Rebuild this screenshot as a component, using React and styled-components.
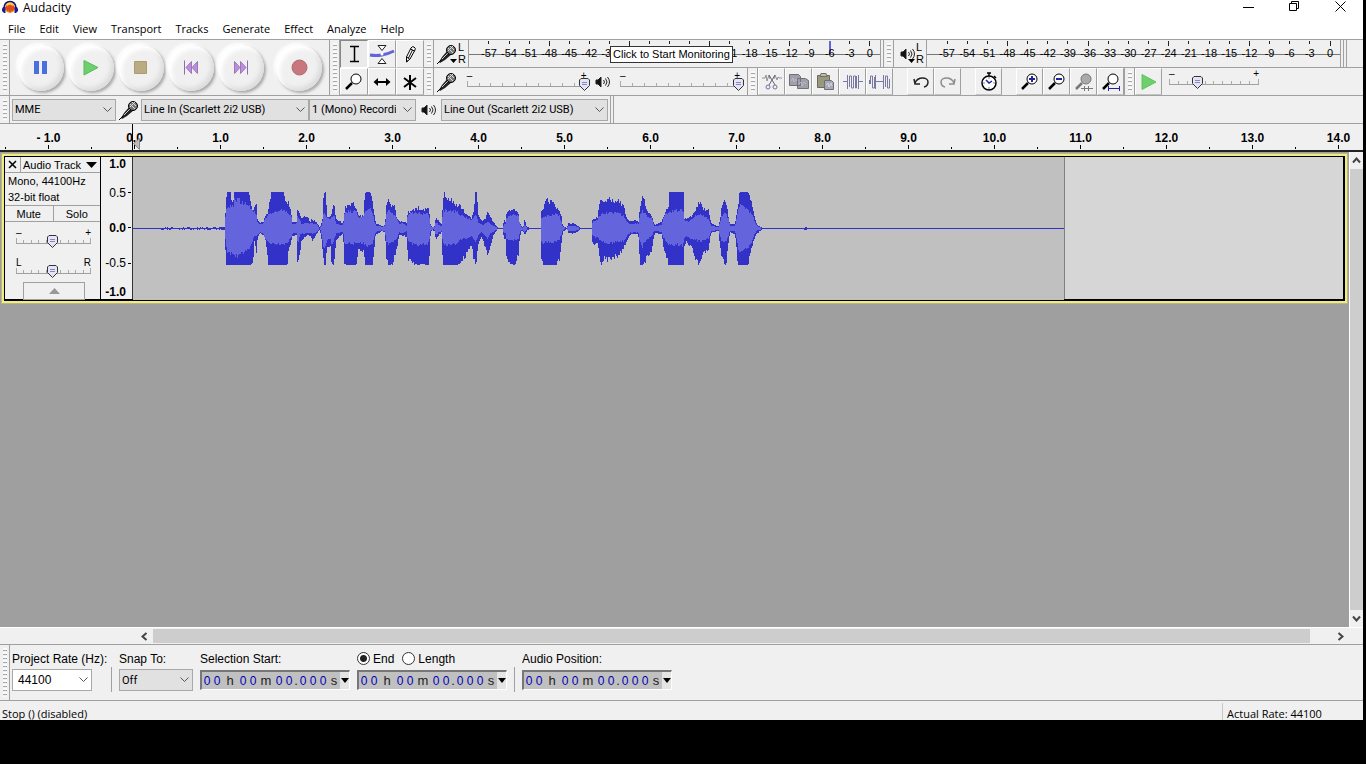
import { useState } from "react"
import styled, { createGlobalStyle, css } from "styled-components"

const meterMarks = [57, 54, 51, 48, 45, 42, 39, 36, 33, 30, 27, 24, 21, 18, 15, 12, 9, 6, 3, 0]
const menus = ["File", "Edit", "View", "Transport", "Tracks", "Generate", "Effect", "Analyze", "Help"]
const seconds = Array.from({ length: 16 }, (_, i) => i - 1)

const CLIP_WIDTH = 931
const CLIP_MID = 71
const CLIP_PEAK = 36

// [x, peak up, peak down, rms up, rms down] in thirds of a pixel
const envelope = [
  [0, 0, 0, 0, 0], [80, 0, 0, 0, 0], [85, 1, 1, 0, 0], [240, 1, 1, 0, 0], [274, 3, 3, 0, 0],
  [279, 80, 108, 60, 50], [282, 111, 108, 60, 70], [293, 111, 108, 66, 75], [296, 72, 108, 60, 75],
  [302, 80, 108, 72, 82], [304, 111, 108, 88, 84], [346, 111, 108, 70, 64], [352, 80, 108, 58, 50],
  [358, 55, 104, 50, 40], [362, 52, 75, 50, 25], [364, 68, 35, 50, 22], [371, 68, 75, 35, 22],
  [373, 24, 30, 18, 18], [381, 16, 12, 10, 10], [391, 18, 18, 14, 14], [396, 34, 30, 28, 28],
  [402, 42, 60, 36, 34], [405, 46, 108, 40, 36], [410, 80, 108, 44, 40], [414, 108, 108, 46, 44],
  [451, 111, 108, 56, 46], [456, 85, 108, 50, 46], [462, 78, 108, 46, 46], [466, 76, 70, 46, 40],
  [474, 45, 35, 38, 24], [478, 18, 20, 12, 14], [490, 20, 18, 14, 12], [493, 50, 95, 34, 40],
  [496, 55, 100, 34, 40], [500, 45, 80, 30, 20], [504, 30, 35, 12, 15], [521, 36, 20, 16, 12],
  [531, 20, 20, 14, 14], [538, 26, 36, 14, 14], [551, 16, 14, 10, 8], [560, 2, 2, 0, 0],
  [564, 8, 20, 3, 8], [568, 30, 60, 20, 30], [572, 105, 108, 50, 60], [578, 108, 108, 40, 50],
  [582, 30, 50, 30, 30], [592, 36, 55, 28, 30], [595, 45, 100, 32, 40], [600, 70, 108, 35, 45],
  [604, 60, 85, 35, 30], [610, 28, 30, 12, 12], [630, 14, 14, 8, 8], [634, 50, 100, 40, 42],
  [638, 65, 108, 50, 44], [646, 72, 108, 50, 44], [664, 72, 108, 52, 44], [671, 50, 105, 46, 44],
  [676, 36, 65, 32, 40], [691, 38, 70, 34, 44], [696, 105, 108, 50, 44], [701, 111, 108, 58, 50],
  [711, 111, 108, 60, 50], [718, 75, 108, 50, 44], [724, 40, 50, 20, 20], [728, 12, 14, 8, 8],
  [736, 12, 14, 6, 6], [746, 6, 6, 4, 4], [756, 8, 10, 6, 6], [759, 60, 85, 40, 38],
  [766, 86, 108, 50, 44], [774, 70, 108, 45, 40], [784, 72, 85, 40, 34], [791, 30, 60, 28, 30],
  [798, 20, 18, 12, 10], [806, 22, 18, 14, 12], [820, 16, 24, 8, 8], [824, 46, 85, 42, 36],
  [836, 50, 100, 46, 44], [856, 60, 108, 44, 48], [866, 50, 104, 44, 46], [882, 62, 108, 46, 44],
  [888, 50, 108, 38, 40], [892, 14, 20, 8, 8], [896, 3, 3, 2, 2], [904, 5, 5, 2, 2],
  [908, 32, 34, 18, 20], [916, 22, 20, 10, 10], [926, 10, 10, 6, 6], [929, 80, 108, 50, 40],
  [934, 108, 108, 50, 44], [938, 90, 108, 54, 46], [956, 84, 108, 52, 44], [971, 66, 108, 48, 42],
  [981, 66, 104, 40, 32], [996, 46, 80, 32, 28], [1016, 30, 50, 26, 22], [1023, 60, 95, 30, 30],
  [1026, 111, 108, 40, 40], [1031, 108, 90, 34, 35], [1036, 40, 45, 16, 18], [1046, 20, 20, 10, 8],
  [1056, 26, 55, 12, 20], [1064, 50, 85, 20, 30], [1072, 35, 50, 12, 12], [1081, 18, 18, 8, 8],
  [1091, 4, 4, 2, 2], [1095, 0, 0, 0, 0], [1109, 0, 0, 0, 0], [1112, 24, 26, 10, 12],
  [1117, 20, 30, 10, 12], [1120, 40, 85, 30, 28], [1129, 52, 104, 38, 34], [1146, 54, 108, 38, 34],
  [1156, 40, 75, 34, 30], [1160, 15, 25, 10, 10], [1166, 3, 3, 1, 1], [1172, 6, 10, 4, 6],
  [1175, 35, 18, 12, 8], [1178, 10, 14, 4, 5], [1183, 3, 3, 1, 1], [1190, 0, 0, 0, 0],
  [1222, 0, 0, 0, 0], [1224, 50, 90, 30, 36], [1231, 55, 108, 34, 42], [1239, 92, 108, 36, 38],
  [1246, 78, 108, 40, 40], [1263, 80, 108, 42, 38], [1271, 58, 108, 40, 36], [1279, 50, 90, 36, 30],
  [1286, 30, 40, 14, 14], [1289, 6, 6, 2, 2], [1302, 0, 0, 0, 0], [1305, 14, 12, 6, 6],
  [1321, 14, 13, 6, 6], [1336, 6, 8, 3, 3], [1341, 0, 0, 0, 0], [1376, 0, 0, 0, 0],
  [1378, 22, 35, 16, 18], [1383, 30, 45, 22, 24], [1393, 30, 40, 24, 26], [1399, 70, 85, 36, 36],
  [1405, 88, 108, 42, 38], [1411, 76, 90, 42, 38], [1429, 86, 92, 46, 42], [1436, 80, 88, 46, 42],
  [1456, 80, 80, 44, 40], [1471, 66, 60, 36, 36], [1481, 30, 35, 20, 22], [1491, 20, 16, 12, 10],
  [1514, 22, 15, 14, 10], [1516, 20, 25, 12, 12], [1520, 60, 95, 36, 38], [1528, 92, 108, 50, 52],
  [1534, 88, 104, 50, 40], [1541, 50, 85, 38, 30], [1556, 36, 60, 30, 22], [1562, 16, 25, 8, 8],
  [1566, 10, 10, 5, 5], [1586, 18, 16, 10, 10], [1591, 35, 50, 30, 28], [1601, 55, 90, 44, 38],
  [1606, 60, 108, 44, 44], [1608, 111, 108, 50, 44], [1646, 111, 108, 54, 50], [1651, 108, 108, 50, 45],
  [1654, 30, 50, 25, 25], [1661, 28, 40, 20, 22], [1668, 30, 50, 20, 26], [1676, 38, 55, 26, 30],
  [1686, 50, 85, 36, 32], [1696, 76, 108, 36, 36], [1703, 80, 92, 40, 38], [1711, 56, 75, 36, 34],
  [1726, 54, 60, 28, 28], [1731, 30, 25, 14, 12], [1736, 12, 10, 6, 6], [1756, 6, 6, 3, 3],
  [1761, 30, 50, 18, 22], [1766, 66, 80, 36, 38], [1773, 78, 98, 46, 40], [1780, 72, 104, 40, 36],
  [1786, 35, 40, 28, 20], [1791, 10, 10, 5, 5], [1806, 14, 14, 6, 6], [1811, 40, 70, 30, 34],
  [1814, 60, 108, 45, 50], [1819, 105, 108, 64, 70], [1823, 111, 108, 68, 72], [1841, 111, 108, 55, 60],
  [1849, 100, 90, 50, 50], [1856, 70, 55, 42, 36], [1863, 40, 30, 25, 18], [1871, 10, 14, 6, 5],
  [1886, 2, 2, 0, 0], [1890, 0, 0, 0, 0], [2010, 0, 0, 0, 0], [2018, 3, 3, 0, 0],
  [2026, 0, 0, 0, 0], [2796, 0, 0, 0, 0],
]

function noise(x, channel) {
  const n = Math.sin(x * 12.9898 + channel * 78.233) * 43758.5453
  return (n - Math.floor(n)) * 2 - 1
}

function sample(x, channel) {
  const next = envelope.findIndex(point => point[0] > x)
  if (next < 1) {
    return 0
  }
  const a = envelope[next - 1]
  const b = envelope[next]
  const value = a[channel] + ((b[channel] - a[channel]) * (x - a[0])) / (b[0] - a[0])
  if (value === 0) {
    return 0
  }
  // ripple so that the slopes look like audio, clipped peaks stay flat
  const depth = value < 4 ? 1 : value * 0.1
  const ripple = value > 104 ? 0 : noise(x, channel) * depth
  return Math.min(CLIP_PEAK, Math.round((value + ripple) / 3))
}

function buildWave(up, down) {
  let path = ""
  for (let x = 0; x < CLIP_WIDTH; x++) {
    const top = sample(x * 3 + 1, up)
    const bottom = sample(x * 3 + 1, down)
    if (top + bottom > 0) {
      path += `M${x} ${CLIP_MID - top}h1V${CLIP_MID + bottom + 1}h-1z`
    }
  }
  return path
}

const peakPath = buildWave(1, 2)
const rmsPath = buildWave(3, 4)

export default function App() {
  return (
    <Screen>
      <GlobalStyle />
      <Window>
        <TitleBar />
        <Menu>
          {menus.map(name => (
            <MenuButton key={name}>{name}</MenuButton>
          ))}
        </Menu>
        <Toolbars />
        <DeviceBar />
        <Timeline />
        <Workspace />
        <BottomScroll />
        <SelectionBar />
        <StatusBar>
          <StatusText>Stop () (disabled)</StatusText>
          <RateText>Actual Rate: 44100</RateText>
        </StatusBar>
      </Window>
    </Screen>
  )
}

function TitleBar() {
  return (
    <Title>
      <svg width="16" height="16" viewBox="0 0 16 16">
        <circle cx="8" cy="8" r="5" fill="#f08a1c" />
        <path d="M4 10l1-4 1 5 1-6 1 7 1-7 1 6 1-5 1 4" fill="none" stroke="#e0401c" />
        <path d="M5 5q3-3 6 0" fill="none" stroke="#ffd23a" strokeWidth="2" />
        <path d="M2 9C1 -1 15 -1 14 9" fill="none" stroke="#10106c" strokeWidth="1.500" />
        <path d="M1 7h2.500v6H2L0 11V9zM15 7h-2.500v6H14l2-2V9z" fill="#1c1c90" />
      </svg>
      <TitleText>Audacity</TitleText>
      <CaptionButton aria-label="Minimize">
        <svg width="11" height="11"><path d="M0 6.500h11" stroke="#000" /></svg>
      </CaptionButton>
      <CaptionButton aria-label="Restore">
        <svg width="11" height="11" fill="none" stroke="#000">
          <path d="M0.500 2.500h7v7h-7zM2.500 2.500v-2h7v7h-2" />
        </svg>
      </CaptionButton>
      <CaptionButton aria-label="Close">
        <svg width="11" height="11" stroke="#000"><path d="M0.500 0.500l10 10M10.500 0.500l-10 10" /></svg>
      </CaptionButton>
    </Title>
  )
}

function Toolbars() {
  return (
    <ToolDock>
      <Grip />
      <Transport>
        <RoundButton aria-label="Pause">
          <svg width="14" height="14"><path d="M0 0h5v13H0zM8 0h5v13H8z" fill="#4a70e0" /></svg>
        </RoundButton>
        <RoundButton aria-label="Play">
          <svg width="16" height="16"><path d="M1 0.500L15 7.500L1 15z" fill="#6dd06d" stroke="#58b858" /></svg>
        </RoundButton>
        <RoundButton aria-label="Stop">
          <svg width="14" height="14"><path d="M0.500 0.500h12v12h-12z" fill="#bcab82" stroke="#ab9b75" /></svg>
        </RoundButton>
        <RoundButton aria-label="Skip to Start">
          <svg width="14" height="15">
            <path d="M0.500 0.500v14" stroke="#8d6bb5" />
            <path d="M7.500 1.500L2 7.500L7.500 13.500zM13.500 1.500L8 7.500L13.500 13.500z" fill="#bb8fdc" stroke="#9a78b8" />
          </svg>
        </RoundButton>
        <RoundButton aria-label="Skip to End">
          <svg width="14" height="15">
            <path d="M13.500 0.500v14" stroke="#8d6bb5" />
            <path d="M0.500 1.500L6 7.500L0.500 13.500zM6.500 1.500L12 7.500L6.500 13.500z" fill="#bb8fdc" stroke="#9a78b8" />
          </svg>
        </RoundButton>
        <RoundButton aria-label="Record" $apart>
          <svg width="17" height="17"><circle cx="8.500" cy="8.500" r="7.500" fill="#c8787c" stroke="#b06a6e" /></svg>
        </RoundButton>
      </Transport>
      <Grip $divided />
      <ToolGrid>
        <ToolButton aria-label="Selection Tool" $pressed>
          <svg width="20" height="20"><path d="M6 2.500h9M6 17.500h9M10.500 2v16" stroke="#000" strokeWidth="1.500" /></svg>
        </ToolButton>
        <ToolButton aria-label="Envelope Tool">
          <svg width="26" height="22" fill="none">
            <path d="M1 12q6 1 12 0t12-4" stroke="#6464d8" strokeWidth="3" />
            <path d="M9 2.500h8l-4 5zM9 20.500h8l-4-5z" fill="#fff" stroke="#222" />
            <circle cx="13" cy="11" r="1.500" fill="#fff" />
          </svg>
        </ToolButton>
        <ToolButton aria-label="Draw Tool">
          <svg width="20" height="20">
            <path d="M6.500 13l4.500-9q1-2 3-1t1 3l-5 9-3.500 3z" fill="#fff" stroke="#000" />
            <path d="M12.500 6l-4 8M6.500 13l3 2M10.500 5l4 2M7 16v2" stroke="#000" />
          </svg>
        </ToolButton>
        <ToolButton aria-label="Zoom Tool"><Magnifier /></ToolButton>
        <ToolButton aria-label="Time Shift Tool">
          <svg width="20" height="20">
            <path d="M4 10h12" stroke="#000" strokeWidth="2" />
            <path d="M6 6v8l-4.500-4zM14 6v8l4.500-4z" />
          </svg>
        </ToolButton>
        <ToolButton aria-label="Multi-Tool">
          <svg width="20" height="20"><path d="M10 3v15M4 6l12 9M16 6L4 15" stroke="#000" strokeWidth="2" /></svg>
        </ToolButton>
      </ToolGrid>
      <MeterStack>
        <StackRow $ruled>
          <Grip />
          <MeterPanel>
            <Mic />
            <Channels />
            <Meter peak={6} covered={[36, 24]} />
            <Tooltip role="tooltip">Click to Start Monitoring</Tooltip>
          </MeterPanel>
          <Grip $divided />
          <MeterPanel $playback>
            <Speaker />
            <Channels />
            <Meter />
          </MeterPanel>
          <BarEnd />
        </StackRow>
        <StackRow>
          <Grip />
          <Mixer>
            <Mic />
            <Slider label="Recording Volume" start={98} wide />
            <Speaker />
            <Slider label="Playback Volume" start={98} wide />
          </Mixer>
          <Grip $divided />
          <EditButtons />
          <Grip $divided />
          <ToolButton aria-label="Play-at-Speed">
            <svg width="20" height="20"><path d="M3 2.500L17 10L3 17.500z" fill="#6dd06d" stroke="#5cc45c" /></svg>
          </ToolButton>
          <SpeedBox>
            <Slider label="Playback Speed" start={31} />
          </SpeedBox>
        </StackRow>
      </MeterStack>
    </ToolDock>
  )
}

function EditButtons() {
  return (
    <>
      <ToolButton aria-label="Cut">
        <svg width="20" height="20" fill="none" stroke="#8f8f9c">
          <path d="M0 6h3l1-3 1 6 2-6 1 4M12 7l1-4 2 5 1-3 1 1h3" />
          <path d="M7 3l6 10M13 3L7 13" stroke="#666672" />
          <circle cx="6" cy="15" r="2" stroke="#7070a0" /><circle cx="13" cy="15" r="2" stroke="#7070a0" />
        </svg>
      </ToolButton>
      <ToolButton aria-label="Copy">
        <svg width="20" height="20" fill="#a0a0a8" stroke="#70707a">
          <path d="M0.500 2.500h9l2 2v9h-11zM8.500 6.500h8l3 2v8h-11z" />
          <path d="M2 9l2-3 1 4 2-3 1 2M10 12l2-2 1 4 2-4 2 2" fill="none" stroke="#b8b8d4" />
        </svg>
      </ToolButton>
      <ToolButton aria-label="Paste">
        <svg width="20" height="20">
          <path d="M1.500 3.500h12v12h-12z" fill="#98987c" stroke="#6c6c5c" />
          <path d="M5 1.500h5l1 3H4z" fill="#bcbcae" stroke="#70706a" />
          <path d="M8.500 8.500h7l2 2v7h-9z" fill="#a8a8b4" stroke="#70707a" />
          <path d="M10 13l2-2 1 4 2-4 1 3" fill="none" stroke="#d4d4e4" />
        </svg>
      </ToolButton>
      <ToolButton aria-label="Trim Audio">
        <svg width="20" height="20" fill="none" stroke="#7878a0">
          <path d="M0 9.500h4M16 9.500h4M4.500 3v14M15.500 3v14M6.500 15V4h2v12h2V4h2v12h1V4" />
        </svg>
      </ToolButton>
      <ToolButton aria-label="Silence Audio">
        <svg width="22" height="20" fill="none" stroke="#7878a0">
          <path d="M0.500 8v4M1.500 12V4h2v12h2V5M6.500 3v14M6.500 9.500h8M14.500 3v14M16.500 15V4h2v12h2V7" />
        </svg>
      </ToolButton>
      <Gap />
      <ToolButton aria-label="Undo">
        <svg width="20" height="20" fill="none" stroke="#222" strokeWidth="1.500">
          <path d="M4 11C7 4 17 5 17 10q0 4-4 5" /><path d="M3 7l1 5h5" />
        </svg>
      </ToolButton>
      <ToolButton aria-label="Redo">
        <svg width="20" height="20" fill="none" stroke="#8c8c8c" strokeWidth="1.500">
          <path d="M16 11C13 4 3 5 3 10q0 4 4 5" /><path d="M17 7l-1 5h-5" />
        </svg>
      </ToolButton>
      <Gap />
      <ToolButton aria-label="Sync-Lock Tracks">
        <svg width="20" height="20" fill="none" stroke="#000" strokeWidth="1.500">
          <path d="M8 1h4M10 1v3M15 4l2 2" /><circle cx="10" cy="11" r="7" fill="#fff" />
          <path d="M7 8l3 3 3-2" stroke="#2020a0" />
          <path d="M10 5.500v1M10 15.500v1M4.500 11h1M14.500 11h1" strokeWidth="1" />
        </svg>
      </ToolButton>
      <Gap />
      <ToolButton aria-label="Zoom In"><Magnifier sign="M9 7h6M12 4v6" /></ToolButton>
      <ToolButton aria-label="Zoom Out"><Magnifier sign="M9 7h6" /></ToolButton>
      <ToolButton aria-label="Fit Selection"><Magnifier muted /></ToolButton>
      <ToolButton aria-label="Fit Project"><Magnifier fit /></ToolButton>
    </>
  )
}

function Magnifier({ sign, muted, fit }) {
  const ink = muted ? "#777" : "#000"
  return (
    <svg width="20" height="20" fill="none">
      <path d="M8 11l-6 6" stroke={ink} strokeWidth="2.500" />
      <circle cx="12" cy="7" r="5" fill={muted ? "#aaa" : "#fff"} stroke={ink} />
      {sign && <path d={sign} stroke="#2020a0" strokeWidth="2" />}
      {muted && <path d="M7 16.500h12M10.500 14v5M14.500 14v5" stroke="#777" />}
      {fit && <path d="M7 16.500h12M7.500 14v5M18.500 14v5" stroke="#2020a0" />}
    </svg>
  )
}

function Mic() {
  return (
    <svg width="22" height="22">
      <path d="M3 19l3-5 6-7 4 4-7 6-5 3z" fill="#222" />
      <path d="M1 21l4-4" stroke="#000" />
      <path d="M6 16l6-6" stroke="#ccc" />
      <circle cx="15" cy="7" r="4.500" fill="#777" stroke="#000" />
      <path d="M12 5l5 5M14 3l4 4M12 8l5-5" stroke="#ddd" />
    </svg>
  )
}

function Speaker() {
  return (
    <svg width="16" height="16" fill="none" stroke="#222">
      <path d="M1 6h2l3-3v10l-3-3H1z" fill="#111" />
      <path d="M8.500 6q2 2 0 4M10.500 4.500q3 3.500 0 7M12.500 3q4 5 0 10" />
    </svg>
  )
}

function Channels() {
  return (
    <ChannelBox>
      <svg width="7" height="4"><path d="M0 0h7L3.500 4z" /></svg>
      <ChannelNames>
        <span>L</span>
        <span>R</span>
      </ChannelNames>
    </ChannelBox>
  )
}

function Meter({ peak, covered = [0, 1] }) {
  // marks fully behind the hint keep their tick but get no label
  const isCovered = mark => mark <= covered[0] && mark >= covered[1]

  return (
    <MeterScale>
      {meterMarks.map(mark => (
        <MeterCell key={mark} $long={mark % 12 === 0} $peak={mark === peak}>
          {isCovered(mark) ? null : mark === 0 ? "0" : `-${mark}`}
        </MeterCell>
      ))}
    </MeterScale>
  )
}

function Slider({ label, start, wide, ends = ["–", "+"] }) {
  const [value, setValue] = useState(start)
  return (
    <SliderBox $wide={wide}>
      <SliderEnds>
        <span>{ends[0]}</span>
        <span>{ends[1]}</span>
      </SliderEnds>
      <SliderTicks>
        {Array.from({ length: 11 }, (_, i) => (
          <i key={i} />
        ))}
      </SliderTicks>
      <Thumb style={{ left: `${value}%` }} width="13" height="15">
        <path d="M3 1.500h7l1.500 1.500v5.500l-5 5-5-5V3z" fill="#e4e4f4" stroke="#333" />
        <path d="M4 5.500h5M4 7.500h5" stroke="#8888c0" />
      </Thumb>
      <RangeInput
        type="range"
        aria-label={label}
        value={value}
        onChange={e => setValue(Number(e.target.value))}
      />
    </SliderBox>
  )
}

function Dropdown({ id, label, children, width, white }) {
  return (
    <SelectBox $width={width}>
      <Select id={id} aria-label={label} $white={white}>
        <option>{children}</option>
      </Select>
      <svg width="9" height="6" fill="none" stroke="#555"><path d="M0.500 0.500l4 4 4-4" /></svg>
    </SelectBox>
  )
}

function DeviceBar() {
  return (
    <Devices>
      <Grip />
      <DeviceList>
        <Dropdown label="Audio Host" width={104}>MME</Dropdown>
        <DeviceIcon><Mic /></DeviceIcon>
        <Dropdown label="Recording Device" width={168}>Line In (Scarlett 2i2 USB)</Dropdown>
        <Dropdown label="Recording Channels" width={107}>1 (Mono) Recording Channel</Dropdown>
        <DeviceIcon><Speaker /></DeviceIcon>
        <Dropdown label="Playback Device" width={167}>Line Out (Scarlett 2i2 USB)</Dropdown>
      </DeviceList>
      <BarEnd />
    </Devices>
  )
}

function Timeline() {
  return (
    <Ruler>
      {seconds.map(second => (
        <RulerCell key={second}>
          <RulerLabel>{second < 0 ? "- 1.0" : `${second}.0`}</RulerLabel>
        </RulerCell>
      ))}
      <Playhead width="9" height="27">
        <path d="M0.500 0v27" stroke="#000" />
        <path d="M1.500 19.500l6-5v11z" fill="#bbb" stroke="#888" />
      </Playhead>
    </Ruler>
  )
}

function Workspace() {
  return (
    <Work>
      <TrackArea>
        <Track>
          <TrackControls>
            <TrackHead>
              <CloseTrack aria-label="Close track">
                <svg width="9" height="9"><path d="M1 1l7 7M8 1L1 8" stroke="#000" strokeWidth="1.500" /></svg>
              </CloseTrack>
              <TrackName>
                Audio Track
                <svg width="11" height="6"><path d="M0 0h11L5.500 6z" /></svg>
              </TrackName>
            </TrackHead>
            <TrackInfo>
              <span>Mono, 44100Hz</span>
              <span>32-bit float</span>
            </TrackInfo>
            <MuteSolo>
              <TrackButton>Mute</TrackButton>
              <TrackButton>Solo</TrackButton>
            </MuteSolo>
            <TrackSliders>
              <Slider label="Gain" start={48} />
              <Slider label="Pan" start={48} ends={["L", "R"]} />
            </TrackSliders>
            <Collapse aria-label="Collapse track">
              <svg width="11" height="6"><path d="M0 6h11L5.500 0z" fill="#999" /></svg>
            </Collapse>
          </TrackControls>
          <Amplitude>
            <Level $bold>1.0</Level>
            <Level $tick>0.5</Level>
            <Level $bold $tick>0.0</Level>
            <Level $tick>-0.5</Level>
            <Level $bold>-1.0</Level>
          </Amplitude>
          <Clip width={CLIP_WIDTH} height="143" shapeRendering="crispEdges">
            <rect y={CLIP_MID} width={CLIP_WIDTH} height="1" fill="#3232c8" />
            <path d={peakPath} fill="#3232c8" />
            <path d={rmsPath} fill="#6464dc" />
          </Clip>
          <EmptyTrack />
        </Track>
      </TrackArea>
      <SideScroll>
        <ScrollButton aria-label="Scroll up">
          <svg width="9" height="7" fill="none" stroke="#444" strokeWidth="2"><path d="M1 5.500l3.500-4 3.500 4" /></svg>
        </ScrollButton>
        <ScrollThumb />
        <ScrollButton aria-label="Scroll down">
          <svg width="9" height="7" fill="none" stroke="#444" strokeWidth="2"><path d="M1 1.500l3.500 4 3.500-4" /></svg>
        </ScrollButton>
      </SideScroll>
    </Work>
  )
}

function BottomScroll() {
  return (
    <HorizontalScroll>
      <ScrollButton aria-label="Scroll left">
        <svg width="7" height="9" fill="none" stroke="#444" strokeWidth="2"><path d="M5.500 1L1.500 4.500l4 3.500" /></svg>
      </ScrollButton>
      <ScrollThumb />
      <ScrollSpace />
      <ScrollButton aria-label="Scroll right">
        <svg width="7" height="9" fill="none" stroke="#444" strokeWidth="2"><path d="M1.500 1l4 3.500-4 3.500" /></svg>
      </ScrollButton>
    </HorizontalScroll>
  )
}

function TimeField({ label }) {
  return (
    <TimeBox role="group" aria-label={label}>
      {"00h00m00.000s".split("").map((char, i) =>
        char === "0" ? (
          <Digit key={i} defaultValue="0" maxLength={1} aria-label={`${label} digit ${i + 1}`} />
        ) : (
          <Unit key={i} $narrow={char === "."}>{char}</Unit>
        )
      )}
      <TimeMenu aria-label={`${label} format`}>
        <svg width="8" height="5"><path d="M0 0h8L4 5z" /></svg>
      </TimeMenu>
    </TimeBox>
  )
}

function SelectionBar() {
  return (
    <Selection>
      <Grip />
      <SelectionFields>
        <Field>
          <FieldLabel htmlFor="rate">Project Rate (Hz):</FieldLabel>
          <Dropdown id="rate" width={80} white>44100</Dropdown>
        </Field>
        <Separator />
        <Field>
          <FieldLabel htmlFor="snap">Snap To:</FieldLabel>
          <Dropdown id="snap" width={74}>Off</Dropdown>
        </Field>
        <Field>
          <FieldName>Selection Start:</FieldName>
          <TimeField label="Selection Start" />
        </Field>
        <Field>
          <RadioRow>
            <RadioLabel>
              <Radio type="radio" name="range" defaultChecked />
              End
            </RadioLabel>
            <RadioLabel>
              <Radio type="radio" name="range" />
              Length
            </RadioLabel>
          </RadioRow>
          <TimeField label="Selection End" />
        </Field>
        <Separator />
        <Field>
          <FieldName>Audio Position:</FieldName>
          <TimeField label="Audio Position" />
        </Field>
      </SelectionFields>
    </Selection>
  )
}

const GlobalStyle = createGlobalStyle`
  * {
    box-sizing: border-box;
  }

  body {
    margin: 0;
    background: #000;
    color: #000;
    font-family: "Liberation Sans", Arial, sans-serif;
    font-size: 12px;
  }

  button, input, select {
    font: inherit;
    color: inherit;
    margin: 0;
    padding: 0;
    border: none;
    background: none;
  }

  svg {
    display: block;
    flex: none;
  }
`

const Screen = styled.div`
  min-height: 100vh;
  display: flex;
  padding: 0 3px 44px 0;
  background: #000;
`

const Window = styled.div`
  flex: 1;
  min-width: 0;
  display: flex;
  flex-direction: column;
  background: #f0f0f0;
  overflow: hidden;
`

const segoe = css`
  font-family: "Open Sans", "Noto Sans", sans-serif;
  font-size: 11px;
`

const Title = styled.header`
  height: 18px;
  display: flex;
  align-items: flex-start;
  background: #fff;
  padding-left: 2px;
`

const TitleText = styled.span`
  ${segoe}
  flex: 1;
  margin-left: 5px;
  font-size: 12px;
  line-height: 15px;
`

const CaptionButton = styled.button`
  width: 46px;
  height: 13px;
  display: grid;
  place-items: center;
`

const Menu = styled.nav`
  height: 21px;
  display: flex;
  background: #fff;
  padding-left: 1px;
`

const MenuButton = styled.button`
  ${segoe}
  padding: 0 7px;
  line-height: 20px;
`

const ToolDock = styled.div`
  display: flex;
  height: 57px;
  border-top: 1px solid #a0a0a0;
  border-bottom: 1px solid #a0a0a0;
`

const Grip = styled.div`
  flex: none;
  width: ${({ $divided }) => ($divided ? "11px" : "10px")};
  border-right: 1px solid #a0a0a0;
  border-left: ${({ $divided }) => ($divided ? "1px solid #a0a0a0" : "none")};
  padding: 3px 2px 3px 3px;
  background: repeating-linear-gradient(#fafafa 0 2px, #a8a8a8 2px 3px, #f0f0f0 3px 4px) content-box;
`

const Transport = styled.div`
  flex: none;
  display: flex;
  align-items: center;
  gap: 4px;
  width: 319px;
  padding-left: 8px;
`

const RoundButton = styled.button`
  width: 46px;
  height: 46px;
  flex: none;
  display: grid;
  place-items: center;
  border-radius: 50%;
  margin-left: ${({ $apart }) => ($apart ? "8px" : 0)};
  background: #f0f0f0;
  box-shadow:
    2px 2px 3px #a8a8a8,
    -2px -2px 3px #fff,
    inset 4px 4px 4px #fff,
    inset -3px -3px 4px #dcdcdc;
`

const ToolGrid = styled.div`
  flex: none;
  display: grid;
  grid-template-columns: repeat(3, 28px);
  grid-template-rows: 28px 27px;
`

const ToolButton = styled.button`
  flex: none;
  width: 27px;
  min-height: 27px;
  display: grid;
  place-items: center;
  border: 1px solid #fff;
  border-right-color: #a0a0a0;
  border-bottom-color: #c4c4c4;

  ${ToolGrid} & {
    width: 28px;
  }

  ${({ $pressed }) =>
    $pressed &&
    css`
      border-color: #888 #fff #fff #888;
      background: #eaeaea;
    `}
`

const MeterStack = styled.div`
  flex: 1;
  min-width: 0;
`

const StackRow = styled.div`
  display: flex;
  height: ${({ $ruled }) => ($ruled ? "28px" : "27px")};
  border-bottom: ${({ $ruled }) => ($ruled ? "1px solid #a0a0a0" : "none")};
`

const MeterPanel = styled.div`
  position: relative;
  flex: 0 1 449px;
  min-width: 0;
  display: flex;
  align-items: center;
  padding-left: ${({ $playback }) => ($playback ? "6px" : "2px")};
  padding-right: 2px;
`

const ChannelBox = styled.div`
  display: flex;
  align-items: flex-end;
  height: 24px;
  margin-left: -8px;
  padding-bottom: 1px;

  svg {
    margin-bottom: 2px;
  }
`

const ChannelNames = styled.div`
  display: flex;
  flex-direction: column;
  font-size: 11px;
  line-height: 12px;
  margin-left: 1px;
`

const MeterScale = styled.div`
  flex: 1;
  min-width: 0;
  display: flex;
  height: 27px;
  margin-left: 2px;
  padding-left: 10px;
  border-left: 1px solid #a0a0a0;
  border-right: 1px solid #a0a0a0;
  background: linear-gradient(#777, #777) 0 14px / 100% 1px no-repeat;
`

const MeterCell = styled.span`
  flex: 1;
  min-width: 0;
  display: flex;
  flex-direction: column;
  align-items: center;
  font-size: 11px;
  line-height: 12px;
  white-space: nowrap;

  &::before {
    content: "";
    width: 1px;
    height: ${({ $long }) => ($long ? "5px" : "3px")};
    margin-top: 1px;
    margin-bottom: ${({ $long }) => ($long ? "1px" : "3px")};
    background: #222;
  }

  ${({ $peak }) =>
    $peak &&
    css`
      &::before {
        width: 2px;
        height: 13px;
        margin-bottom: -7px;
        background: #6464dc;
      }
    `}
`

const Tooltip = styled.div`
  position: absolute;
  left: 176px;
  top: 6px;
  height: 17px;
  padding: 0 2px;
  border: 1px solid #333;
  background: #fff;
  font-size: 11px;
  line-height: 15px;
  white-space: nowrap;
`

const BarEnd = styled.div`
  width: 4px;
  border-left: 1px solid #a0a0a0;
  border-right: 1px solid #a0a0a0;
`

const Mixer = styled.div`
  flex: none;
  display: flex;
  align-items: center;
  justify-content: space-between;
  width: 313px;
  padding: 0 7px 0 2px;
`

const SpeedBox = styled.div`
  width: 90px;
  margin-left: 7px;
`

const SliderBox = styled.div`
  position: relative;
  width: ${({ $wide }) => ($wide ? "120px" : "auto")};
  height: 24px;
`

const SliderEnds = styled.div`
  display: flex;
  justify-content: space-between;
  height: 11px;
  font-size: 10px;
  line-height: 11px;
`

const SliderTicks = styled.div`
  display: flex;
  justify-content: space-between;
  align-items: flex-end;
  height: 6px;
  border-bottom: 1px solid #a0a0a0;

  i {
    width: 1px;
    height: 3px;
    background: #aaa;
  }

  i:first-child, i:last-child {
    height: 5px;
  }
`

const Thumb = styled.svg`
  position: absolute;
  top: 7px;
  margin-left: -6px;
`

const RangeInput = styled.input`
  position: absolute;
  left: 0;
  top: 4px;
  width: 100%;
  height: 20px;
  opacity: 0;
`

const Gap = styled.div`
  flex: none;
  width: 14px;
`

const Devices = styled.div`
  display: flex;
  height: 28px;
  border-bottom: 1px solid #a0a0a0;
`

const DeviceList = styled.div`
  display: flex;
  align-items: center;
  padding: 0 2px;
`

const DeviceIcon = styled.div`
  width: 25px;
  display: grid;
  place-items: center;
`

const SelectBox = styled.div`
  position: relative;
  width: ${({ $width }) => $width}px;

  svg {
    position: absolute;
    right: 4px;
    top: 8px;
    pointer-events: none;
  }
`

const Select = styled.select`
  appearance: none;
  width: 100%;
  height: 22px;
  padding: 0 19px 0 ${({ $white }) => ($white ? "5px" : "2px")};
  border: 1px solid #a8a8a8;
  border-radius: 0;
  background: ${({ $white }) => ($white ? "#fff" : "#e1e1e1")};
  font-family: ${({ $white }) => ($white ? "inherit" : `Roboto, "Open Sans", sans-serif`)};
  font-size: ${({ $white }) => ($white ? "12px" : "11px")};
`

const Ruler = styled.div`
  position: relative;
  display: flex;
  height: 28px;
  padding-left: 5px;
  border-bottom: 2px solid #222;
  overflow: hidden;
`

const RulerCell = styled.div`
  flex: none;
  width: 86px;
  display: flex;
  align-items: flex-end;

  &::before {
    content: "";
    width: 1px;
    height: 2px;
    background: #000;
    margin-bottom: 1px;
  }
`

const RulerLabel = styled.span`
  flex: 1;
  display: flex;
  flex-direction: column;
  align-items: center;
  font-weight: bold;
  line-height: 14px;

  &::after {
    content: "";
    width: 1px;
    height: 4px;
    margin-bottom: 1px;
    background: #000;
  }
`

const Playhead = styled.svg`
  position: absolute;
  left: 132px;
  top: 0;
`

const Work = styled.div`
  flex: 1;
  display: flex;
  background: #9f9f9f;
`

const TrackArea = styled.div`
  flex: 1;
  min-width: 0;
  padding: 2px 2px 0;
  border-right: 1px solid #fff;
`

const Track = styled.section`
  display: flex;
  height: 149px;
  border: 2px solid #f0ec80;
  outline: 1px solid #b8b58c;
  background: #000;
  padding: 1px 2px 2px 1px;
  overflow: hidden;
`

const TrackControls = styled.div`
  flex: none;
  width: 96px;
  background: #f0f0f0;
  border-right: 1px solid #000;
`

const TrackHead = styled.div`
  display: flex;
  height: 16px;
  border-bottom: 1px solid #a0a0a0;
`

const CloseTrack = styled.button`
  width: 16px;
  display: grid;
  place-items: center;
  border-right: 1px solid #a0a0a0;
`

const TrackName = styled.button`
  flex: 1;
  display: flex;
  align-items: center;
  justify-content: space-between;
  padding: 0 3px 0 2px;
  font-size: 11px;
  white-space: nowrap;
`

const TrackInfo = styled.div`
  display: flex;
  flex-direction: column;
  padding: 0 3px;
  font-size: 11px;
  line-height: 16px;
`

const MuteSolo = styled.div`
  display: grid;
  grid-template-columns: 1fr 1fr;
  border-bottom: 1px solid #a0a0a0;
`

const TrackButton = styled.button`
  height: 16px;
  border-top: 1px solid #a0a0a0;
  font-size: 11px;
  line-height: 14px;

  & + & {
    border-left: 1px solid #a0a0a0;
  }
`

const TrackSliders = styled.div`
  display: grid;
  gap: 6px;
  padding: 5px 9px 0 11px;
`

const Collapse = styled.button`
  display: grid;
  place-items: center;
  width: 62px;
  height: 18px;
  margin: 1px 0 0 18px;
  border: 1px solid #a0a0a0;
`

const Amplitude = styled.div`
  flex: none;
  width: 32px;
  display: grid;
  grid-template-rows: 18px 1fr 1fr 1fr 18px;
  align-items: center;
  border-right: 1px solid #333;
  background: #f0f0f0;
`

const Level = styled.span`
  display: flex;
  align-items: center;
  justify-content: flex-end;
  padding-right: ${({ $tick }) => ($tick ? "1px" : "6px")};
  font-weight: ${({ $bold }) => ($bold ? "bold" : "normal")};
  line-height: 14px;

  &:first-child {
    align-self: start;
  }

  &:last-child {
    align-self: end;
  }

  &::after {
    content: "";
    display: ${({ $tick }) => ($tick ? "block" : "none")};
    width: 3px;
    height: 1px;
    margin-left: 2px;
    background: #000;
  }
`

const Clip = styled.svg`
  background: #c0c0c0;
`

const EmptyTrack = styled.div`
  flex: 1;
  border-left: 1px solid #808080;
  background: #d6d6d6;
`

const SideScroll = styled.div`
  width: 13px;
  display: flex;
  flex-direction: column;
  background: #f0f0f0;
`

const ScrollButton = styled.button`
  flex: none;
  height: 17px;
  display: grid;
  place-items: center;
`

const ScrollThumb = styled.div`
  flex: 1;
  background: #cdcdcd;
`

const ScrollSpace = styled.div`
  width: 22px;
`

const HorizontalScroll = styled.div`
  display: flex;
  height: 17px;
  padding: 1px 14px 1px 136px;
  border-top: 1px solid #fff;

  ${ScrollButton} {
    width: 17px;
    height: 14px;
  }
`

const Selection = styled.div`
  display: flex;
  height: 57px;
  border-top: 1px solid #a0a0a0;
  border-bottom: 1px solid #a0a0a0;
`

const SelectionFields = styled.div`
  display: flex;
  gap: 7px;
  padding: 5px 0 0 2px;
`

const Field = styled.div`
  display: flex;
  flex-direction: column;

  &:first-child {
    width: 92px;
  }
`

const FieldLabel = styled.label`
  height: 19px;
  line-height: 18px;
  white-space: nowrap;
`

const FieldName = styled.span`
  height: 19px;
  line-height: 18px;
`

const Separator = styled.div`
  width: 1px;
  height: 25px;
  margin-top: 17px;
  background: #a0a0a0;
`

const RadioRow = styled.div`
  display: flex;
  gap: 8px;
  height: 19px;
`

const RadioLabel = styled.label`
  display: flex;
  gap: 3px;
  line-height: 18px;
`

const Radio = styled.input`
  appearance: none;
  width: 13px;
  height: 13px;
  margin-top: 2px;
  border: 1px solid #333;
  border-radius: 50%;
  background: #fff;

  &:checked {
    background: radial-gradient(#222 0 3px, #fff 4px);
  }
`

const TimeBox = styled.div`
  display: flex;
  align-items: center;
  width: 150px;
  height: 20px;
  margin-top: 1px;
  border: 1px solid #fff;
  border-top: 2px solid #777;
  border-left: 2px solid #777;
  background: #c0c0c0;
`

const Digit = styled.input`
  flex: none;
  width: 10px;
  height: 15px;
  text-align: center;
  color: #0000b8;
`

const Unit = styled.span`
  flex: none;
  width: ${({ $narrow }) => ($narrow ? "4px" : "16px")};
  text-align: center;
  font-size: 13px;
  color: #222;

  &:nth-last-child(2) {
    flex: 1;
  }
`

const TimeMenu = styled.button`
  flex: none;
  width: 9px;
  height: 17px;
  display: grid;
  place-items: center;
  background: #e4e4e4;
`

const StatusBar = styled.footer`
  ${segoe}
  display: flex;
  height: 19px;
  padding-left: 2px;
  line-height: 25px;
  overflow: hidden;
`

const StatusText = styled.span`
  flex: 1;
`

const RateText = styled.span`
  width: 141px;
  margin-top: 2px;
  padding-left: 4px;
  border-left: 1px solid #c8c8c8;
  line-height: 21px;
`
